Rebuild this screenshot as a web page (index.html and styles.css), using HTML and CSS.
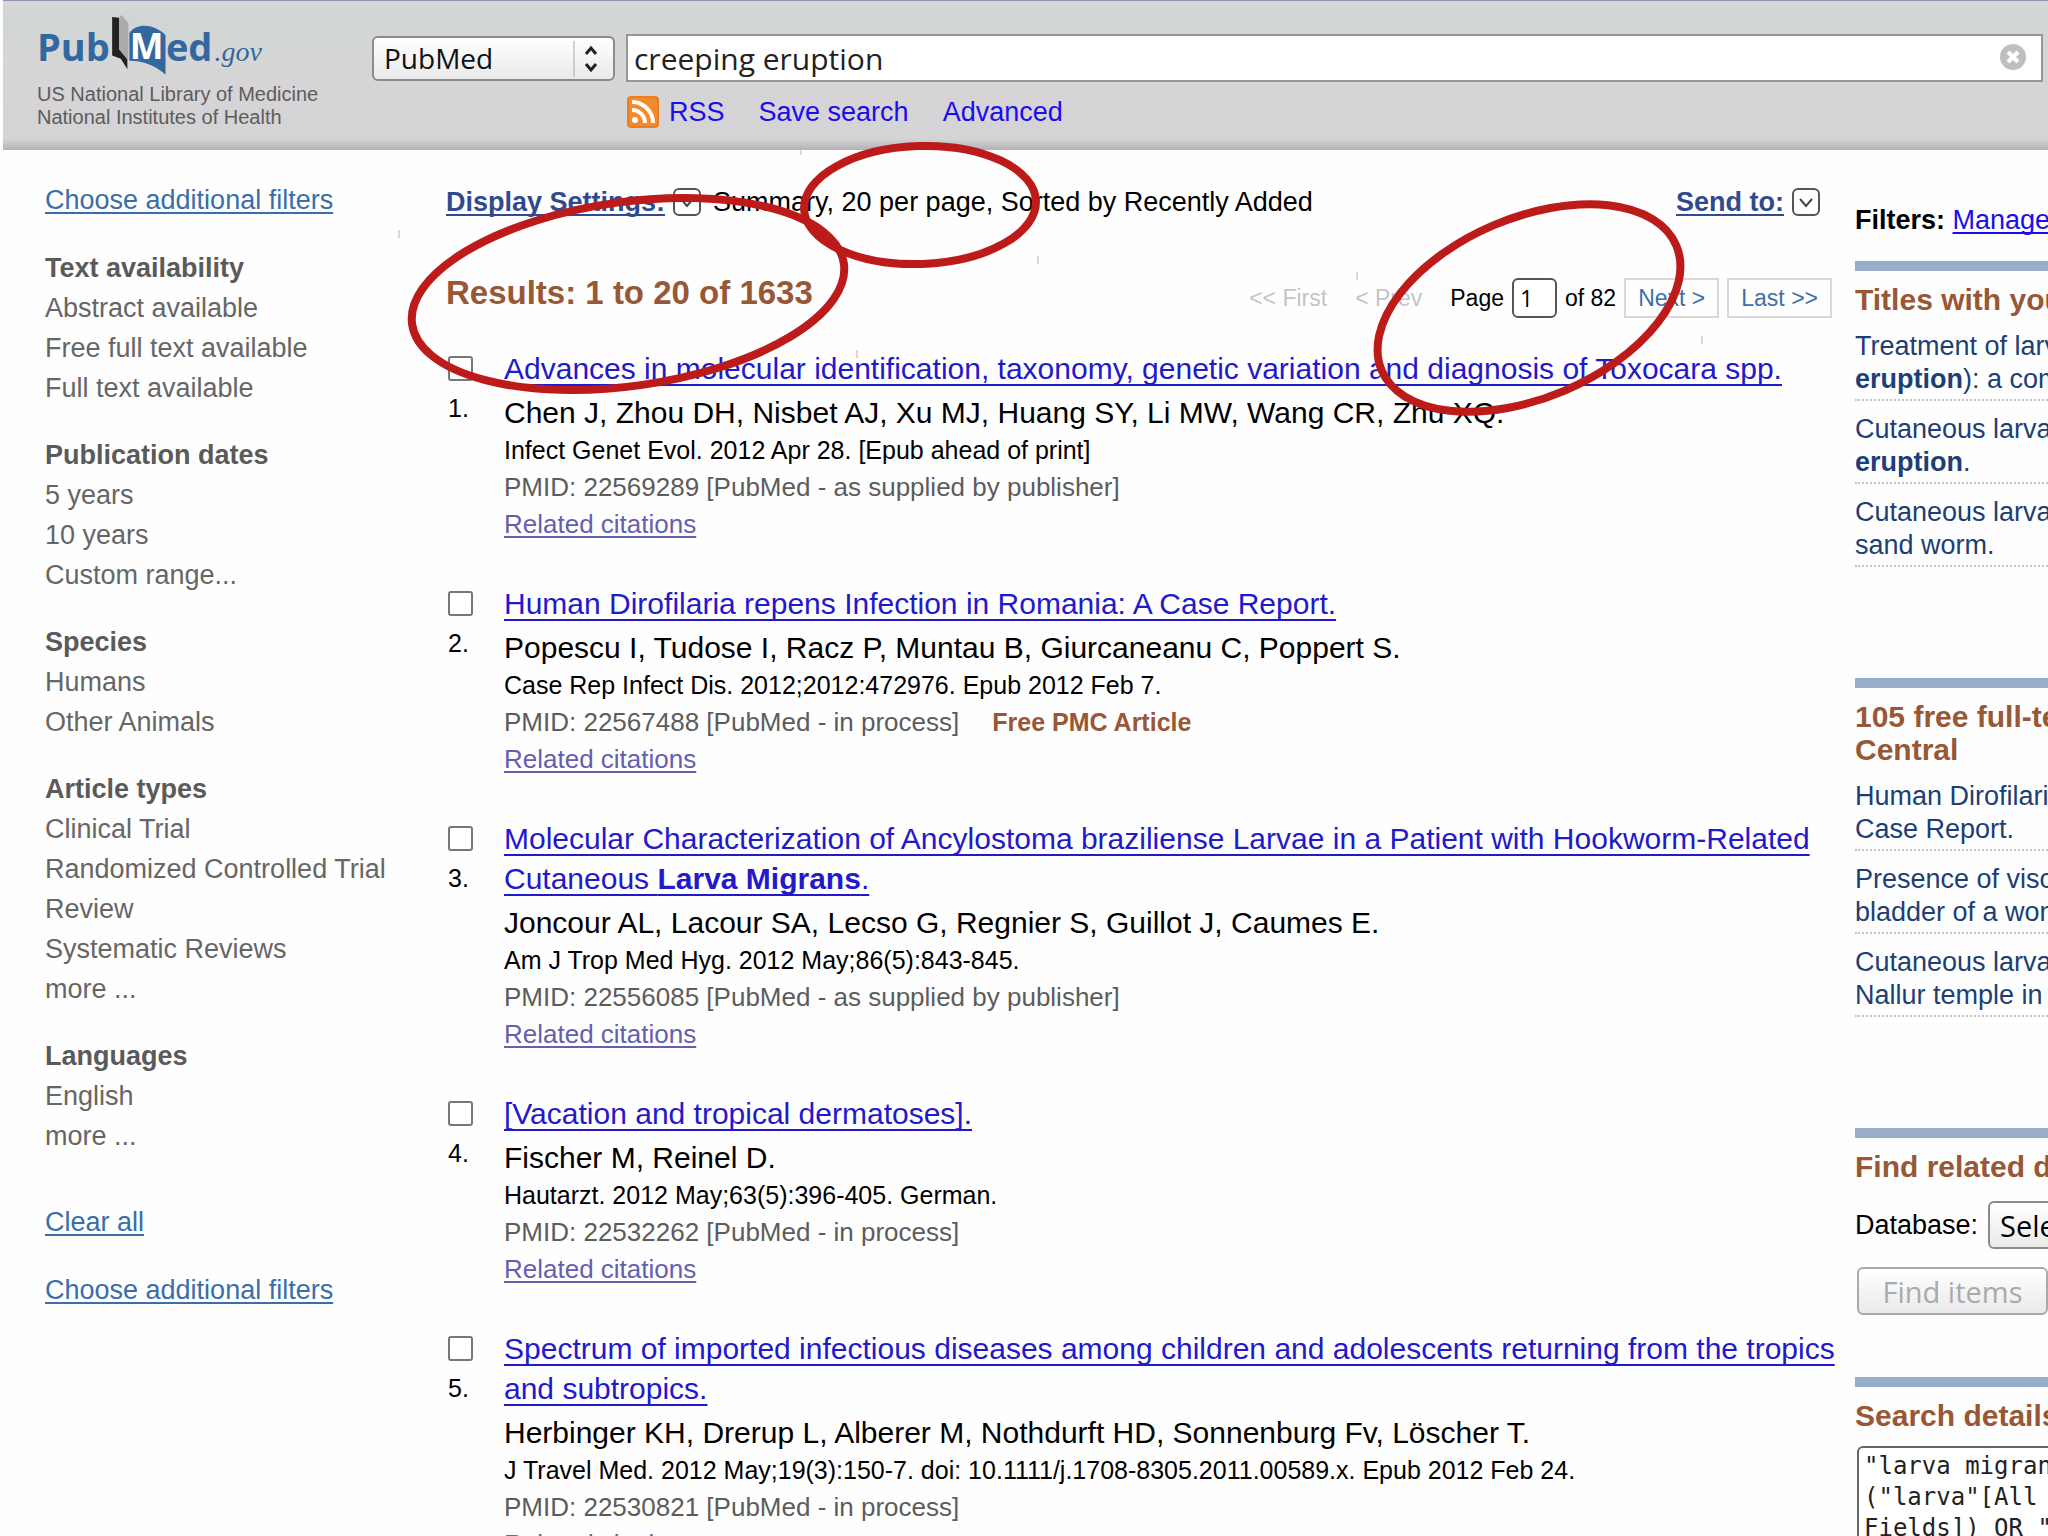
FILE: index.html
```html
<!DOCTYPE html>
<html lang="en">

<head>
    <meta charset="UTF-8">
    <meta name="viewport" content="width=device-width, initial-scale=1.0">
    <title>creeping eruption - PubMed</title>
    <link rel="stylesheet" href="styles.css">
</head>

<body>
    <header class="header">
        <div class="brand">
            <div class="logo">Pub<svg class="book" viewBox="270 20 168 187">
                    <path d="M276 32L297 34V128L322 158V190L302 158L276 148Z" fill="#222" />
                    <path d="M297 34L304 26L325 50V160L322 160L297 130Z" fill="#aaa" />
                    <path d="M328 80C350 48 402 52 437 86V206C412 182 372 164 328 164Z" fill="#32689f" />
                    <text x="329" y="160" font-size="108">M</text>
                </svg>ed<span class="gov">.gov</span></div>
            <div class="agency">US National Library of Medicine<br>National Institutes of Health</div>
        </div>
        <form class="search">
            <div class="db">
                <select aria-label="Database">
                    <option>PubMed</option>
                </select>
                <svg class="db-arrows" viewBox="0 0 40 36">
                    <path d="M1 0V36" stroke="#aaa" stroke-width="1" />
                    <path d="M13 13L18 7L23 13M13 23L18 29L23 23" fill="none" stroke="#222" stroke-width="3" />
                </svg>
            </div>
            <div class="term">
                <input type="text" value="creeping eruption" aria-label="Search term">
                <button type="button" aria-label="Clear search">
                    <svg viewBox="0 0 28 28">
                        <circle cx="14" cy="14" r="13" fill="#bfbfbf" />
                        <path d="M9 9L19 19M19 9L9 19" stroke="#fff" stroke-width="4" />
                    </svg>
                </button>
            </div>
            <div class="search-links">
                <a href="#">
                    <svg class="rss" viewBox="0 0 32 32">
                        <rect width="32" height="32" rx="4" fill="#f58a2c" />
                        <rect x="1" y="1" width="30" height="30" rx="4" fill="none" stroke="#d9701d" />
                        <circle cx="8" cy="24" r="3" fill="#fff" />
                        <path d="M5 14A13 13 0 0 1 18 27M5 6A21 21 0 0 1 26 27" fill="none" stroke="#fff" stroke-width="4" />
                    </svg>RSS</a>
                <a href="#">Save search</a>
                <a href="#">Advanced</a>
            </div>
        </form>
    </header>

    <div class="page">
        <nav class="filters">
            <a class="filter-link" href="#">Choose additional filters</a>
            <h3>Text availability</h3>
            <ul>
                <li>Abstract available</li>
                <li>Free full text available</li>
                <li>Full text available</li>
            </ul>
            <h3>Publication dates</h3>
            <ul>
                <li>5 years</li>
                <li>10 years</li>
                <li>Custom range...</li>
            </ul>
            <h3>Species</h3>
            <ul>
                <li>Humans</li>
                <li>Other Animals</li>
            </ul>
            <h3>Article types</h3>
            <ul>
                <li>Clinical Trial</li>
                <li>Randomized Controlled Trial</li>
                <li>Review</li>
                <li>Systematic Reviews</li>
                <li>more ...</li>
            </ul>
            <h3>Languages</h3>
            <ul>
                <li>English</li>
                <li>more ...</li>
            </ul>
            <a class="filter-link" href="#">Clear all</a>
            <a class="filter-link" href="#">Choose additional filters</a>
        </nav>

        <main class="results">
            <div class="settings">
                <a href="#">Display Settings:</a>
                <svg class="drop" viewBox="0 0 28 28">
                    <rect x="1" y="1" width="26" height="26" rx="5" fill="none" stroke="#555" stroke-width="2" />
                    <path d="M8 11L14 18L20 11" fill="none" stroke="#444" stroke-width="2" />
                </svg>
                <span>Summary, 20 per page, Sorted by Recently Added</span>
                <a class="send" href="#">Send to:</a>
                <svg class="drop" viewBox="0 0 28 28">
                    <rect x="1" y="1" width="26" height="26" rx="5" fill="none" stroke="#555" stroke-width="2" />
                    <path d="M8 11L14 18L20 11" fill="none" stroke="#444" stroke-width="2" />
                </svg>
            </div>

            <div class="count">
                <h2>Results: 1 to 20 of 1633</h2>
                <div class="pager">
                    <span class="off">&lt;&lt; First</span>
                    <span class="off">&lt; Prev</span>
                    <label for="pageno">Page</label>
                    <input id="pageno" type="text" value="1">
                    <span>of 82</span>
                    <a href="#">Next &gt;</a>
                    <a href="#">Last &gt;&gt;</a>
                </div>
            </div>

            <div class="docs">
                <article class="doc">
                    <label class="pick"><input type="checkbox">1.</label>
                    <div>
                        <a class="title" href="#">Advances in molecular identification, taxonomy, genetic variation and diagnosis of Toxocara spp.</a>
                        <p class="authors">Chen J, Zhou DH, Nisbet AJ, Xu MJ, Huang SY, Li MW, Wang CR, Zhu XQ.</p>
                        <p class="journal">Infect Genet Evol. 2012 Apr 28. [Epub ahead of print]</p>
                        <p class="pmid">PMID: 22569289 [PubMed - as supplied by publisher]</p>
                        <a class="related" href="#">Related citations</a>
                    </div>
                </article>
                <article class="doc">
                    <label class="pick"><input type="checkbox">2.</label>
                    <div>
                        <a class="title" href="#">Human Dirofilaria repens Infection in Romania: A Case Report.</a>
                        <p class="authors">Popescu I, Tudose I, Racz P, Muntau B, Giurcaneanu C, Poppert S.</p>
                        <p class="journal">Case Rep Infect Dis. 2012;2012:472976. Epub 2012 Feb 7.</p>
                        <p class="pmid">PMID: 22567488 [PubMed - in process]<b class="free">Free PMC Article</b></p>
                        <a class="related" href="#">Related citations</a>
                    </div>
                </article>
                <article class="doc">
                    <label class="pick"><input type="checkbox">3.</label>
                    <div>
                        <a class="title" href="#">Molecular Characterization of Ancylostoma braziliense Larvae in a Patient with Hookworm-Related Cutaneous <b>Larva Migrans</b>.</a>
                        <p class="authors">Joncour AL, Lacour SA, Lecso G, Regnier S, Guillot J, Caumes E.</p>
                        <p class="journal">Am J Trop Med Hyg. 2012 May;86(5):843-845.</p>
                        <p class="pmid">PMID: 22556085 [PubMed - as supplied by publisher]</p>
                        <a class="related" href="#">Related citations</a>
                    </div>
                </article>
                <article class="doc">
                    <label class="pick"><input type="checkbox">4.</label>
                    <div>
                        <a class="title" href="#">[Vacation and tropical dermatoses].</a>
                        <p class="authors">Fischer M, Reinel D.</p>
                        <p class="journal">Hautarzt. 2012 May;63(5):396-405. German.</p>
                        <p class="pmid">PMID: 22532262 [PubMed - in process]</p>
                        <a class="related" href="#">Related citations</a>
                    </div>
                </article>
                <article class="doc">
                    <label class="pick"><input type="checkbox">5.</label>
                    <div>
                        <a class="title" href="#">Spectrum of imported infectious diseases among children and adolescents returning from the tropics and subtropics.</a>
                        <p class="authors">Herbinger KH, Drerup L, Alberer M, Nothdurft HD, Sonnenburg Fv, Löscher T.</p>
                        <p class="journal">J Travel Med. 2012 May;19(3):150-7. doi: 10.1111/j.1708-8305.2011.00589.x. Epub 2012 Feb 24.</p>
                        <p class="pmid">PMID: 22530821 [PubMed - in process]</p>
                        <a class="related" href="#">Related citations</a>
                    </div>
                </article>
            </div>
        </main>

        <aside class="discovery">
            <p class="manage"><b>Filters:</b> <a href="#">Manage</a></p>
            <section class="portlet">
                <h3>Titles with your</h3>
                <ul>
                    <li><a href="#">Treatment of larva<br><b>eruption</b>): a comp</a></li>
                    <li><a href="#">Cutaneous larva<br><b>eruption</b>.</a></li>
                    <li><a href="#">Cutaneous larva<br>sand worm.</a></li>
                </ul>
            </section>
            <section class="portlet">
                <h3>105 free full-text<br>Central</h3>
                <ul>
                    <li><a href="#">Human Dirofilaria<br>Case Report.</a></li>
                    <li><a href="#">Presence of visc<br>bladder of a wom</a></li>
                    <li><a href="#">Cutaneous larva<br>Nallur temple in</a></li>
                </ul>
            </section>
            <section class="portlet related-data">
                <h3>Find related data</h3>
                <div class="field">
                    <label for="reldb">Database:</label>
                    <select id="reldb">
                        <option>Select</option>
                    </select>
                </div>
                <button type="button" disabled>Find items</button>
            </section>
            <section class="portlet">
                <h3>Search details</h3>
                <textarea aria-label="Search details" cols="16" rows="5">"larva migrans
("larva"[All
Fields]) OR "</textarea>
            </section>
        </aside>

        <!-- hand-drawn rings over the page -->
        <svg class="rings" viewBox="0 0 2048 1536">
            <g fill="none" stroke="#bd1a1a" stroke-width="8">
                <ellipse cx="920" cy="205" rx="116" ry="59" transform="rotate(-2 920 205)" />
                <ellipse cx="628" cy="294" rx="218" ry="92" transform="rotate(-8 628 294)" />
                <ellipse cx="1529" cy="308" rx="160" ry="90" transform="rotate(-23 1529 308)" />
            </g>
            <path d="M399 230V238M801 147V155M857 350V358M1038 256V264M1357 272V280M1702 336V344" stroke="#d9a5a5" />
        </svg>
    </div>
</body>

</html>
```
FILE: styles.css
```css
* {
    margin: 0;
    padding: 0;
    box-sizing: border-box;
}

html,
body {
    height: 100%;
}

body {
    padding-left: 3px;
    overflow: hidden;
    position: relative;
    background-color: #fefefe;
    font-family: "Liberation Sans", Arial, sans-serif;
    font-size: 27px;
    color: #000;
}

ul {
    list-style: none;
}

/* header */
.header {
    display: flex;
    height: 150px;
    border-top: 1px solid #8c96b4;
    background: linear-gradient(#d8d7d7 0, #d1d5d5 20px, #d6d6d6 60px, #d6d4d7 90px, #d4d3d5 138px, #b3b1b3 149px);
}

.brand {
    flex: 0 0 369px;
    padding: 12px 0 0 34px;
}

.logo {
    font-family: "Open Sans", sans-serif;
    font-size: 38px;
    font-weight: bold;
    line-height: 40px;
    color: #32689f;
}

.book {
    width: 56px;
    height: 62px;
    vertical-align: -14px;
}

.book text {
    font-family: "Open Sans", sans-serif;
    font-weight: bold;
    fill: #fff;
}

.gov {
    margin-left: 2px;
    font-family: "Liberation Serif", serif;
    font-size: 28px;
    font-style: italic;
    font-weight: normal;
}

.agency {
    margin-top: 8px;
    font-size: 20px;
    line-height: 23px;
    color: #5c5c5c;
}

.search {
    flex: 1;
    display: grid;
    grid-template-columns: 243px 1fr;
    align-content: start;
    align-items: center;
    gap: 13px 11px;
    padding: 33px 5px 0 0;
}

.db,
.term {
    position: relative;
}

.db select {
    display: block;
    width: 100%;
    height: 45px;
    padding-left: 10px;
    appearance: none;
    border: 2px solid #8b8b8b;
    border-radius: 6px;
    background: linear-gradient(#fff, #f4f4f4 50%, #e9e9e9);
    font-family: "Open Sans", sans-serif;
    font-size: 28px;
    color: #111;
}

.db-arrows {
    position: absolute;
    top: 5px;
    right: 2px;
    width: 40px;
    height: 36px;
    pointer-events: none;
}

.term input {
    display: block;
    width: 100%;
    height: 48px;
    padding: 0 50px 0 6px;
    border: 2px solid #969696;
    background-color: #fff;
    font-family: "Open Sans", sans-serif;
    font-size: 30px;
    color: #222;
}

.term button {
    position: absolute;
    top: 9px;
    right: 16px;
    width: 28px;
    height: 28px;
    border: none;
    background: none;
}

.search-links {
    grid-column: 2;
    display: flex;
    gap: 34px;
    line-height: 34px;
}

.search-links a {
    display: flex;
    align-items: center;
    gap: 10px;
    color: #1a0dee;
    text-decoration: none;
}

.rss {
    width: 32px;
    height: 32px;
    margin-left: 1px;
}

/* columns */
.page {
    display: flex;
}

.filters {
    flex: 0 0 443px;
    padding: 30px 0 0 42px;
    line-height: 40px;
    color: #666;
}

.filters h3 {
    font-size: 27px;
    color: #5a5a5a;
}

.filters ul {
    margin-bottom: 27px;
}

.filter-link {
    display: block;
    margin-bottom: 28px;
    color: #3a6ea8;
    text-decoration-thickness: 2px;
    text-underline-offset: 3px;
}

.filters ul + .filter-link {
    margin-top: 46px;
}

.results {
    flex: 1;
    min-width: 0;
    padding: 30px 23px 0 0;
}

.settings {
    display: flex;
    align-items: center;
    line-height: 44px;
}

.settings a {
    font-weight: bold;
    color: #2f4a8f;
    text-decoration-thickness: 2px;
    text-underline-offset: 3px;
    text-decoration-skip-ink: none;
}

.drop {
    width: 28px;
    height: 28px;
    margin-left: 8px;
}

.settings span {
    margin-left: 12px;
}

.settings .send {
    margin-left: auto;
}

.settings .send + .drop {
    margin-right: 12px;
}

.count {
    display: flex;
    justify-content: space-between;
    margin-top: 54px;
}

.count h2 {
    font-size: 33px;
    line-height: 30px;
    color: #985735;
}

.pager {
    display: flex;
    align-items: center;
    gap: 8px;
    height: 40px;
    font-size: 23px;
}

.pager .off {
    margin-right: 20px;
    color: #c4c4c8;
}

.pager input {
    width: 45px;
    height: 40px;
    padding-left: 6px;
    border: 2px solid #555;
    border-radius: 6px;
    font-family: "Open Sans", sans-serif;
    font-size: 23px;
}

.pager a {
    padding: 0 12px;
    border: 2px solid #d8d8d8;
    line-height: 36px;
    color: #3c6fa9;
    text-decoration: none;
}

/* result list */
.docs {
    margin: 31px -15px 0 0;
}

.doc {
    display: grid;
    grid-template-columns: 58px 1fr;
    margin-bottom: 43px;
}

.pick {
    padding-left: 2px;
    font-size: 25px;
    line-height: 40px;
}

.pick input {
    display: block;
    width: 25px;
    height: 25px;
    margin: 7px 0;
    appearance: none;
    border: 2px solid #777;
    border-radius: 3px;
    background-color: #fff;
}

.title {
    display: block;
    margin-bottom: 4px;
    font-size: 30px;
    line-height: 40px;
    color: #2219cc;
    text-decoration-thickness: 2px;
    text-underline-offset: 5px;
    text-decoration-skip-ink: none;
}

.authors {
    font-size: 30px;
    line-height: 40px;
}

.journal {
    font-size: 25px;
    line-height: 34px;
}

.pmid {
    font-size: 26px;
    line-height: 40px;
    color: #5c5c5c;
}

.free {
    margin-left: 33px;
    font-size: 25px;
    color: #985735;
}

.related {
    display: block;
    font-size: 26px;
    line-height: 34px;
    color: #6560ad;
    text-decoration-thickness: 2px;
    text-underline-offset: 3px;
}

/* right column */
.discovery {
    flex: 0 0 193px;
    overflow: hidden;
    padding-top: 52px;
    line-height: 33px;
    white-space: nowrap;
}

.manage {
    margin-bottom: 23px;
    line-height: 36px;
}

.manage a {
    color: #1a0dee;
    text-decoration-thickness: 2px;
    text-underline-offset: 3px;
    text-decoration-skip-ink: none;
}

.portlet {
    margin-bottom: 111px;
    padding-top: 12px;
    border-top: 10px solid #97adc8;
}

.portlet h3 {
    margin-bottom: 14px;
    font-size: 30px;
    color: #985735;
}

.portlet li {
    margin-bottom: 12px;
    padding-bottom: 3px;
    border-bottom: 2px dotted #c4c4c4;
}

.portlet li a {
    color: #1c3f75;
    text-decoration: none;
}

.related-data {
    margin-bottom: 62px;
}

.field {
    display: flex;
    align-items: center;
    gap: 10px;
    margin: 18px 0;
}

.field select,
.related-data button {
    height: 48px;
    border: 2px solid #8b8b8b;
    border-radius: 6px;
    background: linear-gradient(#fff, #e9e9e9);
    font-family: "Open Sans", sans-serif;
    font-size: 29px;
}

.field select {
    width: 200px;
    padding-left: 10px;
    appearance: none;
}

.related-data button {
    width: 191px;
    margin-left: 2px;
    border-color: #aaa;
    color: #aaa;
}

.portlet textarea {
    margin-left: 2px;
    padding: 3px 5px;
    border: 2px solid #666;
    border-radius: 6px;
    resize: none;
    overflow: hidden;
    font-family: "DejaVu Sans Mono", monospace;
    font-size: 24px;
    line-height: 31px;
    color: #222;
}

/* annotation layer */
.rings {
    position: absolute;
    top: 0;
    left: 0;
    width: 2048px;
    height: 1536px;
    pointer-events: none;
}
```
